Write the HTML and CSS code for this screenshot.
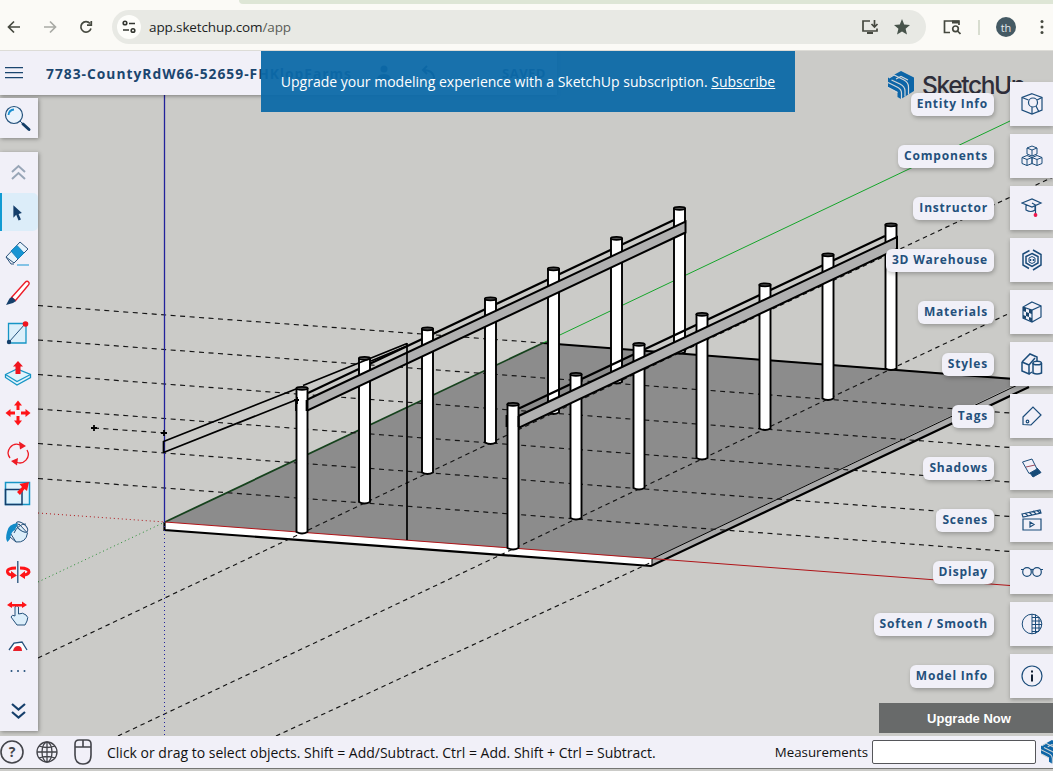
FILE: index.html
```html
<!DOCTYPE html>
<html lang="en">
<head>
<meta charset="utf-8">
<title>SketchUp</title>
<link rel="stylesheet" href="styles.css">
</head>
<body>
<div class="browser">
  <div class="tab-strip"></div>
  <div class="nav">
    <svg class="nav-btns" viewBox="0 0 112 34" fill="none" stroke="#45483f" stroke-width="1.7">
      <path d="M20 17H9M14 11.500L8.500 17L14 22.500"/>
      <path stroke="#a9aaa5" d="M44 17H55M50 11.500L55.500 17L50 22.500"/>
      <path d="M90 13.500A5.200 5.200 0 1 0 91 18.500M91.300 11V15.200H87"/>
    </svg>
    <div class="url">
      <span class="site"><svg width="16" height="14" viewBox="0 0 16 14" fill="none" stroke="#333630" stroke-width="1.6"><circle cx="4" cy="3" r="1.800"/><path d="M8 3.500H14M2 10H8"/><circle cx="12" cy="10.500" r="1.800"/></svg></span>
      <span class="address">app.sketchup.com<i>/app</i></span>
      <svg class="install" width="18" height="16" viewBox="0 0 18 16" fill="none" stroke="#45483f" stroke-width="1.700"><path d="M9 2H2V12H16V9.500M13.500 1V8M10.500 5L13.500 8L16.500 5"/><path stroke-width="2" d="M6 14H12"/></svg>
      <svg width="16" height="16" viewBox="0 0 16 16"><path fill="#47534a" d="M8 0L10.200 5.500L16 6L11.600 9.800L13 15.500L8 12.500L3 15.500L4.400 9.800L0 6L5.800 5.500Z"/></svg>
    </div>
    <svg class="lens" width="18" height="16" viewBox="0 0 18 16" fill="none" stroke="#45483f" stroke-width="1.700"><path d="M7 13.500H1.500V2H16V6"/><path stroke-width="3" d="M9 3H16"/><circle cx="12.500" cy="9.800" r="2.800"/><path d="M14.500 12L17.500 15"/></svg>
    <span class="divider"></span>
    <span class="avatar">th</span>
    <svg class="more" width="4" height="16" viewBox="0 0 4 16" fill="#45483f"><circle cx="2" cy="2.500" r="1.500"/><circle cx="2" cy="8" r="1.500"/><circle cx="2" cy="13.500" r="1.500"/></svg>
  </div>
</div>

<main class="workspace">
  <svg class="scene" viewBox="0 51 1053 685">
    <defs>
      <g id="post">
        <path d="M-5.500-145V-2Q0 1 5.500-2V-145Z" fill="#fff" stroke="#000" stroke-width="1.900"/>
        <ellipse cy="-145.700" rx="5.700" ry="1.500" fill="#555" stroke="#000" stroke-width="1.700"/>
      </g>
      <g id="logo">
        <path fill="#0d65a7" d="M13 0L26 6.500V20L13 28L9.500 26V21L0 16V7Z"/>
        <g fill="none" stroke="#d3d6d8" stroke-width="1.200">
          <path d="M0 11.500L10 16.500Q13.500 18.500 13.500 22V28"/>
          <path d="M3.500 9L12 13Q17 15.500 17 20V25.500"/>
          <path d="M1 7L6 4L16 9Q20.500 11.500 20.500 16V23.500"/>
          <path d="M8 8L13 5.500L20 9"/>
          <path d="M0 16.500L9.500 21.500"/>
        </g>
      </g>
    </defs>
    <rect y="51" width="1053" height="685" fill="#cbcbc8"/>
    <path fill="#8c8c8c" d="M165 522L543 343L1028 379L652 559Z"/>
    <path fill="#fff" d="M165 522L652 559V566L165 530Z"/>
    <path fill="#aaa" d="M652 559L1028 380V387L652 566Z"/>
    <g fill="none" stroke="#000">
      <path stroke-width="2.200" d="M164.500 522V530L651 566L1029 387"/>
      <path stroke-width="2" d="M543 343L1014 379"/>
      <path d="M652 566V559L1028 380"/>
      <path stroke="#16421d" stroke-width="1.800" d="M165 522L543 343"/>
    </g>
    <g fill="none" stroke="#151515" stroke-width="1.150" stroke-dasharray="5 4.500">
      <path d="M38 305.500L543 343M38 340L1010 413M38 374.500L1010 447.500M38 409L1010 482M38 443.500L1010 516.500M38 478.500L1010 551.500M94 428L165 433"/>
      <path stroke-dasharray="4.500 3.800" d="M38 658L302 533L679 353L1053 177M118 736L513 549L891 369L1010 313M276 736L652 562"/>
    </g>
    <g fill="none">
      <path stroke="#22229c" stroke-width="1.300" d="M164.500 51V522"/>
      <path stroke="#22229c" stroke-dasharray="1 3" d="M164.500 522V736"/>
      <path stroke="#b01418" d="M165 522L1010 585.500"/>
      <path stroke="#b01418" stroke-dasharray="1 3" d="M38 513L165 522"/>
      <path stroke="#15a52a" d="M543 343L1010 121"/>
      <path stroke="#268d32" stroke-dasharray="1 3" d="M38 582L165 522"/>
    </g>
    <path d="M308 393L675 219.500" fill="none" stroke="#000" stroke-width="2.200"/>
    <use href="#post" x="679.500" y="354"/><use href="#post" x="616.500" y="384"/><use href="#post" x="553.500" y="414.500"/><use href="#post" x="490.500" y="444.500"/><use href="#post" x="427.500" y="474.500"/><use href="#post" x="364.500" y="504"/>
    <path d="M306.500 400L685.500 221.500V232.500L306.500 411Z" fill="#b0b0b0" stroke="#000" stroke-width="2"/>
    <use href="#post" x="302" y="534"/>
    <path d="M163.500 441.500L296 389M303 385.500L407 343.500M163.500 452.500L297 399.500M163.500 441V453M371 361L407 346M407 343V540M296 399V411M306.500 400V411" fill="none" stroke="#000" stroke-width="1.700"/>
    <path d="M519 408.500L885 236" fill="none" stroke="#000" stroke-width="2.200"/>
    <use href="#post" x="891" y="370.500"/><use href="#post" x="828" y="400.500"/><use href="#post" x="765" y="430.500"/><use href="#post" x="702" y="460"/><use href="#post" x="639" y="490"/><use href="#post" x="576" y="520"/>
    <path d="M518.500 416L897 237V249L518.500 428Z" fill="#b0b0b0" stroke="#000" stroke-width="2"/>
    <use href="#post" x="513" y="550"/>
    <path d="M506.500 415V427M518.500 416V427M91 428H97M94 425V431M161 433H167M164 430V436M294 400H299M297 397V404" fill="none" stroke="#000" stroke-width="1.800"/>
    <use href="#logo" x="888" y="71"/>
    <text class="brand" x="922" y="93.500" textLength="104">SketchUp</text>
  </svg>

  <header class="doc-bar">
    <svg width="18" height="12" viewBox="0 0 18 12" stroke="#1b466f" stroke-width="1.200"><path d="M0 .6H18M0 5.600H18M0 10.600H18"/></svg>
    <h1>7783-CountyRdW66-52659-FHKlopFarms</h1>
    <svg width="16" height="16" viewBox="0 0 16 16" fill="#1b466f"><circle cx="8" cy="4" r="3.500"/><path d="M1 15Q1 9 8 9T15 15Z"/></svg>
    <svg width="16" height="16" viewBox="0 0 16 16" fill="none" stroke="#1b466f" stroke-width="2"><path d="M14 14Q14 5 3 5M7 1L3 5L7 9"/></svg>
    <span class="save">SAVED</span>
  </header>
  <div class="banner"><span>Upgrade your modeling experience with a SketchUp subscription. <a>Subscribe</a></span></div>

  <div class="left">
    <div class="search"><svg viewBox="0 0 38 40"><circle cx="14" cy="17" r="8.500" fill="#eaf3fc" stroke="#24517b" stroke-width="1.200"/><path d="M8.500 17Q9 12 14 11.500" fill="none" stroke="#1b8fd0" stroke-width="1.800"/><path d="M20 23L22 25" stroke="#24517b"/><path d="M23 26L29 31.500" stroke="#143d66" stroke-width="3" stroke-linecap="round"/></svg></div>
    <nav class="tools">
      <svg viewBox="0 0 38 40" fill="none" stroke="#98a6b7" stroke-width="2"><path d="M12 20L18.500 14L25 20M12 27L18.500 21L25 27"/></svg>
      <svg class="active" viewBox="0 0 38 40"><path fill="#153f6b" d="M12 13V26L15 23L17.500 29L20 28L17.500 22L21 21Z"/></svg>
      <svg viewBox="0 0 38 40" stroke="#2b537b"><path fill="#e6f3fc" d="M6 25L20 10L28 17L14 31Z"/><path fill="#1695d3" stroke="#1484be" d="M11 19L17 13.500L24 21L18 27Z"/><path fill="none" d="M6 25L11 32H14"/><path stroke="#1695d3" d="M17 33H29"/></svg>
      <svg viewBox="0 0 38 40"><path d="M11.500 25.500L25 10.500Q27 8.500 28.500 10Q30 11.500 28 13.500L15.500 28.500Z" fill="#fff" stroke="#ed1c28" stroke-width="1.400"/><path fill="#153f6b" d="M6 33L9.500 26.500L12 25L16 29L13 31Z"/></svg>
      <svg viewBox="0 0 38 40"><path d="M8.500 11.500H26V31H8.500Z" fill="#dceffa" stroke="#1695c5" stroke-width="1.300"/><path d="M9 30L25 12" stroke="#24517b"/><circle cx="9" cy="30" r="2.200" fill="#153f6b"/><circle cx="25.500" cy="12" r="2.800" fill="#f0141e"/></svg>
      <svg viewBox="0 0 38 40"><path d="M5.500 22.500L17 17L30.500 22.500V25.500L17 33L5.500 25.500Z" fill="#e2f3fc" stroke="#1695c5" stroke-width="1.300"/><path d="M5.500 22.500L17 29.500L30.500 22.500" fill="none" stroke="#1695c5" stroke-width="1.200"/><path fill="#f0141e" d="M18 9L23 14.500H20.500V22H15.500V14.500H13Z"/></svg>
      <svg viewBox="0 0 38 40" fill="#ff1418"><path id="mv" d="M18 8.500L22 13.500H19.500V18H16.500V13.500H14Z"/><use href="#mv" transform="rotate(90 18 21)"/><use href="#mv" transform="rotate(180 18 21)"/><use href="#mv" transform="rotate(270 18 21)"/></svg>
      <svg viewBox="0 0 38 40"><g fill="none" stroke="#ee1b25" stroke-width="1.300"><path d="M10 26A8.500 8.500 0 0 1 20 13M27 18A8.500 8.500 0 0 1 16 30"/></g><path fill="#ee1b25" d="M19 9.500L26 14L20 17.500ZM18 26L11 29L17 33.500Z"/></svg>
      <svg viewBox="0 0 38 40"><path d="M5.500 10.500H29.500V32.500H5.500Z" fill="#dff2fc" stroke="#1695c5" stroke-width="1.500"/><path d="M5.500 17.500H22V32.500H5.500Z" fill="none" stroke="#153f6b" stroke-width="1.500"/><path fill="#ff1418" d="M29 10L27 19L24.500 17L20 23L17 20L22 15L19.500 12Z"/></svg>
      <svg viewBox="0 0 38 40"><path d="M9 19L19 12L27.500 21Q26 31 16 30Z" fill="#dceefa" stroke="#24517b"/><ellipse cx="22" cy="15" rx="7" ry="3.500" transform="rotate(40 22 15)" fill="none" stroke="#24517b"/><path fill="#138bc8" d="M18 11Q8 12 7 20Q5 27 7.500 30L10 27Q11 19 15 18Z"/><path d="M14 21Q18 12 26 12M10 25L16 30" fill="none" stroke="#24517b"/></svg>
      <svg viewBox="0 0 38 40"><g fill="none" stroke="#ff1418" stroke-width="3"><path d="M16 16Q7 16 7.500 20Q8 23 13 23M20 16Q29 16 29 20Q28 23 23 23"/></g><path fill="#ff1418" d="M11 19L17 23.500L11 27ZM25 19L19.500 23.500L25 27Z"/><path d="M17.800 9V31" stroke="#24517b" stroke-width="1.300"/></svg>
      <svg viewBox="0 0 38 40"><path d="M15 15Q17 12 18.500 15V22Q23 20 26 23Q29 25 27 29L25 33H17L11 25Q12 22 15 24Z" fill="#dceefa" stroke="#24517b"/><path fill="#ff1418" d="M7 13L12 9.500V12H22V9.500L27 13L22 16V14.500H12V16Z"/></svg>
      <svg class="cut" viewBox="0 0 38 19"><path d="M9 18L14 11L22 10L27 18" fill="#fff" stroke="#24517b" stroke-width="1.300"/><path fill="#e8202a" d="M13 19Q14 14 18 14T22 19Z"/></svg>
      <svg class="dots" viewBox="0 0 38 40" fill="#24517b"><circle cx="11.500" cy="20" r="1"/><circle cx="18" cy="20" r="1"/><circle cx="24.500" cy="20" r="1"/></svg>
      <svg viewBox="0 0 38 40" fill="none" stroke="#153f6b" stroke-width="2.200"><path d="M12 12L18.500 17.500L25 12M12 20L18.500 25.500L25 20"/></svg>
    </nav>
  </div>

  <aside class="panels">
    <div class="row"><span>Entity Info</span><b><svg viewBox="0 0 22 22" class="med"><path d="M11 .7L21 4.500V17L11 21L1 17V4.500Z"/><circle cx="12" cy="9.500" r="4.500"/><path d="M15 13L18 19M1 4.500L7.500 7M11 14V21M16 7L21 4.500"/></svg></b></div>
    <div class="row"><span>Components</span><b><svg viewBox="0 0 22 22"><path id="cb" d="M11 1L16 3V9L11 11L6 9V3ZM6 3L11 5L16 3M11 5V11"/><use href="#cb" x="-5" y="9.500"/><use href="#cb" x="5" y="9.500"/></svg></b></div>
    <div class="row"><span>Instructor</span><b><svg viewBox="0 0 22 22" class="med"><path d="M1 6L11 2L20 6L11 10ZM5 8V13Q10 16 14 13V9M11 6L14.500 8V17"/><circle cx="14.500" cy="18" r="1.300" fill="#ed174c" stroke="#ed174c"/></svg></b></div>
    <div class="row"><span>3D Warehouse</span><b><svg viewBox="0 0 22 22" class="bold"><path d="M8.500 1.500L2 5V16L8 19.500M12 1L20 5.500V16L12 21M11 4.500L17 7.500V14L11 17.500L5 14V7.500Z"/><path d="M8 9L11 7.500L14 9V13L11 14.500L8 13Z" stroke-width="1"/><path d="M9.500 10V12M12.500 10V12"/></svg></b></div>
    <div class="row"><span>Materials</span><b><svg viewBox="0 0 22 22" class="med"><path d="M11 1L20 5V16L11 21L2 17V6ZM2 6L11 9L20 5M11 9V21"/><path fill="#1b466f" stroke="none" d="M2 6L5 7V11L8 12V8L11 9V13L8 12V16L11 17V21L8 19V16L5 15V11L2 10ZM2 14L5 15V18L2 17Z"/></svg></b></div>
    <div class="row"><span>Styles</span><b><svg viewBox="0 0 22 22" class="bold"><path d="M1 9L9 1L16 4V8M1 9V18L8 21V12L14 5M1 9L8 12M8 21L11 19"/><path d="M12 10V20Q16 22 20.500 20V10"/><ellipse cx="16.200" cy="10" rx="4.200" ry="1.800"/></svg></b></div>
    <div class="row"><span>Tags</span><b><svg viewBox="0 0 22 22" class="med"><path d="M2 12L12 2L20 10L10 20L2 19.500Z"/><circle cx="6.500" cy="16.500" r="1.300"/></svg></b></div>
    <div class="row"><span>Shadows</span><b><svg viewBox="0 0 22 22"><path fill="#174b78" d="M9 16L16 11L20 15.500L12 20Z"/><path fill="#f1f0f8" d="M1.500 5L11 2L16 12L8 16.500Z"/><path stroke="#9c4b5d" d="M5 10L14 8"/></svg></b></div>
    <div class="row"><span>Scenes</span><b><svg viewBox="0 0 22 22" class="med"><path d="M2 10H20V21H2ZM1 5L19 1L20 4L2 8ZM4 4L7 7M8 3L11 6M12 2L15 5M16 1.500L19 4M9 13L13 15.500L9 18Z"/></svg></b></div>
    <div class="row"><span>Display</span><b><svg viewBox="0 0 22 22" class="med"><circle cx="6" cy="11" r="4.300"/><circle cx="16" cy="11" r="4.300"/><path d="M0 8.500H3M19 8.500H22M10 9Q11 8 12 9"/></svg></b></div>
    <div class="row"><span>Soften / Smooth</span><b><svg viewBox="0 0 22 22"><circle cx="11" cy="11" r="9.800"/><path d="M11 1V21M14.500 1.500V20.500M18 4V18M11 4.500H18M11 8H20M11 11.500H21M11 15H20M11 18.500H18"/></svg></b></div>
    <div class="row"><span>Model Info</span><b><svg viewBox="0 0 22 22" class="med"><circle cx="11" cy="11" r="10"/><path stroke="#101d31" stroke-width="2" d="M11 9.500V16.500M11 5.500V7.500"/></svg></b></div>
    <button class="upgrade">Upgrade Now</button>
  </aside>
</main>

<footer class="status">
  <svg width="24" height="24" viewBox="0 0 24 24"><circle cx="12" cy="12" r="11" fill="none" stroke="#43444a" stroke-width="1.600"/><text x="12" y="17" text-anchor="middle">?</text></svg>
  <svg width="22" height="22" viewBox="0 0 22 22" fill="none" stroke="#43444a" stroke-width="1.300"><circle cx="11" cy="11" r="10"/><ellipse cx="11" cy="11" rx="5" ry="10"/><path d="M11 1V21M1 11H21M3 5Q11 8 19 5M3 17Q11 14 19 17"/></svg>
  <svg width="18" height="26" viewBox="0 0 18 26" fill="none" stroke="#43444a" stroke-width="1.600"><path d="M1 5Q1 1 5 1H13Q17 1 17 5V16Q17 25 9 25T1 16ZM1 8H17M9 1V8"/></svg>
  <span class="hint">Click or drag to select objects. Shift = Add/Subtract. Ctrl = Add. Shift + Ctrl = Subtract.</span>
  <label>Measurements</label>
  <input type="text" aria-label="Measurements">
  <svg width="12" height="24" viewBox="0 0 12 24"><use href="#logo" transform="scale(.84)"/></svg>
</footer>
</body>
</html>
```
FILE: styles.css
```css
* { box-sizing: border-box; }
body {
  margin: 0; width: 1053px; height: 771px; overflow: hidden;
  display: grid; grid-template-rows: 51px 685px 35px;
  font-family: "Open Sans", "Noto Sans", sans-serif; background: #cbcbc8;
}
svg { display: block; flex: none; }

.browser { background: #fbfaf6; border-bottom: 1px solid #dddcd7; }
.tab-strip { height: 4px; margin-left: 239px; background: #dee6d6; border-bottom-left-radius: 6px; }
.nav { display: flex; align-items: center; height: 46px; }
.nav-btns { width: 112px; height: 34px; }
.url { display: flex; align-items: center; width: 814px; height: 34px; padding: 0 16px 0 5px; border-radius: 17px; background: #e8e9e4; }
.site { display: grid; place-items: center; width: 24px; height: 24px; border-radius: 50%; background: #fdfdfa; }
.address { margin-left: 8px; font-size: 13.5px; color: #20231e; letter-spacing: -.12px; }
.address i { font-style: normal; color: #5b5e57; }
.install { margin-left: auto; margin-right: 15px; }
.lens { margin-left: 17px; }
.divider { width: 2px; height: 15px; margin-left: 17px; background: #d8ddd0; }
.avatar { display: grid; place-items: center; width: 20px; height: 20px; margin-left: 16px; border-radius: 50%; background: #455a64; color: #e4eaec; font-size: 11px; }
.more { margin-left: 24px; }

.workspace { position: relative; overflow: hidden; }
.scene { position: absolute; inset: 0; width: 1053px; height: 685px; }
.brand { font: 500 24.5px Inter, sans-serif; fill: #2e2e3a; }
.doc-bar {
  position: absolute; top: 0; left: 0; width: 557px; height: 44px;
  display: flex; align-items: center; padding-left: 5px;
  background: #f1f0f8; box-shadow: 0 1px 4px rgba(0,0,0,.4); color: #1b466f;
}
.doc-bar h1 { margin: 0 25px 0 23px; width: 305px; font-size: 13.8px; letter-spacing: 1px; white-space: nowrap; }
.doc-bar svg + svg { margin-left: 28px; }
.save { margin-left: 66px; font-size: 13px; font-weight: 700; letter-spacing: .5px; }
.banner {
  position: absolute; top: 0; left: 261px; width: 534px; height: 61px;
  display: grid; place-items: center; padding-bottom: 1px; background: rgba(12,105,168,.95);
  color: #fff; font-size: 14.03px; white-space: nowrap;
}
.banner a { text-decoration: underline; }

.left { position: absolute; top: 47px; left: 0; width: 38px; display: flex; flex-direction: column; gap: 14px; }
.search, .tools { background: #f1f0f8; box-shadow: 1px 1px 4px rgba(0,0,0,.35); }
.search { height: 40px; }
.tools { height: 579px; }
.tools svg, .search svg { width: 38px; height: 40px; }
.tools .active { height: 38px; margin: 1px 0; background: #dcedf9; border-left: 2px solid #109bd3; border-radius: 0 5px 5px 0; }
.tools .cut { height: 19px; }
.tools .dots { margin-bottom: 1px; }

.panels { position: absolute; top: 31px; right: 0; width: 180px; display: flex; flex-direction: column; align-items: flex-end; gap: 8px; }
.row { display: flex; align-items: center; gap: 16px; height: 44px; }
.row span {
  height: 23px; padding: 0 6px 0 6px; border-radius: 6px; background: #f1f0f8;
  box-shadow: 1px 2px 4px rgba(0,0,0,.25); color: #24507c;
  font-size: 12px; font-weight: 700; line-height: 22px; letter-spacing: .8px; white-space: nowrap;
}
.row b { display: grid; place-items: center; width: 43px; height: 44px; background: #f1f0f8; box-shadow: 0 2px 4px rgba(0,0,0,.25); }
.row b svg { width: 22px; height: 22px; fill: none; stroke: #1b4c7a; stroke-width: 1; }
.row b .med { stroke-width: 1.2; }
.row b .bold { stroke-width: 1.5; }
.upgrade { width: 174px; height: 30px; margin-top: -3px; padding: 0 0 0 6px; border: 0; background: #686a6a; color: #fff; font: 700 13px "Liberation Sans", Arial, sans-serif; }

.status { display: flex; align-items: center; height: 33px; background: #f1f0f8; border-bottom: 1px solid #747573; color: #111; }
.status > svg:nth-child(2) { margin-left: 12px; }
.status > svg:nth-child(3) { margin-left: 16px; }
.status text { font: 700 14px "Open Sans", sans-serif; fill: #43444a; }
.hint { margin-left: 15px; font-size: 14px; white-space: nowrap; }
.status label { margin-left: auto; font-size: 13.3px; }
.status input { width: 164px; height: 24px; margin: 0 5px 0 4px; border: 1px solid #55565a; border-radius: 2px; background: #fff; }
```
